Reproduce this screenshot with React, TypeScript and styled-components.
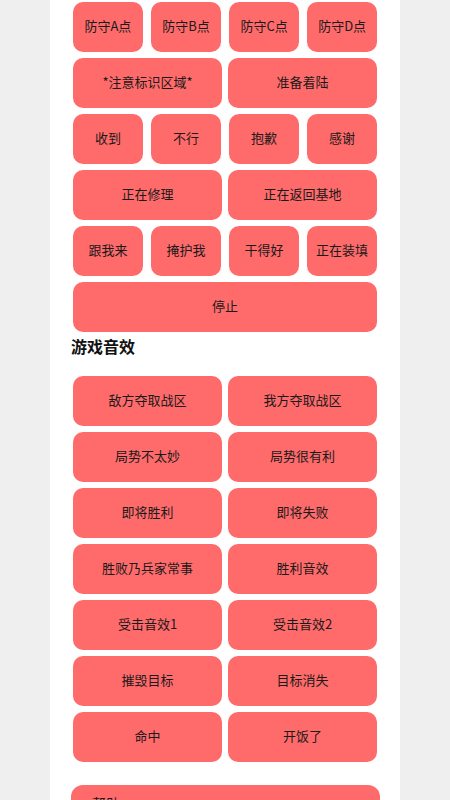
import * as React from 'react'
import styled, { createGlobalStyle } from 'styled-components'

const GlobalStyle = createGlobalStyle`
  html, body {
    margin: 0;
    padding: 0;
    background: #efefef;
    font-family: 'Noto Sans CJK SC', 'Noto Sans', sans-serif;
  }
`

const Page = styled.div`
  width: 350px;
  height: 800px;
  margin: 0 auto;
  background: #fff;
  padding: 2px 23px 0 23px;
  box-sizing: border-box;
  overflow: hidden;
`

const Grid = styled.div<{ cols: number }>`
  display: grid;
  grid-template-columns: repeat(${({ cols }) => cols}, 1fr);
  column-gap: ${({ cols }) => (cols === 4 ? '8.3px' : '6px')};
`

const Rows = styled.div`
  display: flex;
  flex-direction: column;
  gap: 6px;
`

const Button = styled.button`
  height: 50px;
  border: none;
  border-radius: 10px;
  background: #ff6b6b;
  color: #1a1a1a;
  font-family: inherit;
  font-size: 13px;
  padding: 0 0 3px 0;
  cursor: pointer;
`

const Heading = styled.h3`
  margin: 2px 0 18px -2px;
  font-size: 16px;
  line-height: 24px;
  font-weight: 700;
  color: #111;
`

const Panel = styled.div`
  margin: 23px -3px 0 -2px;
  height: 60px;
  border-radius: 12px;
  background: #ff6b6b;
  padding: 8px 21px;
  box-sizing: border-box;
  font-size: 14px;
  line-height: 20px;
  color: #1a1a1a;
`

const quick: string[][] = [
  ['防守A点', '防守B点', '防守C点', '防守D点'],
  ['*注意标识区域*', '准备着陆'],
  ['收到', '不行', '抱歉', '感谢'],
  ['正在修理', '正在返回基地'],
  ['跟我来', '掩护我', '干得好', '正在装填'],
  ['停止'],
]

const sounds: string[][] = [
  ['敌方夺取战区', '我方夺取战区'],
  ['局势不太妙', '局势很有利'],
  ['即将胜利', '即将失败'],
  ['胜败乃兵家常事', '胜利音效'],
  ['受击音效1', '受击音效2'],
  ['摧毁目标', '目标消失'],
  ['命中', '开饭了'],
]

const ButtonRows = ({ rows }: { rows: string[][] }) => (
  <Rows>
    {rows.map((row, i) => (
      <Grid key={i} cols={row.length}>
        {row.map((label) => (
          <Button key={label}>{label}</Button>
        ))}
      </Grid>
    ))}
  </Rows>
)

export default function App() {
  return (
    <>
      <GlobalStyle />
      <Page>
        <ButtonRows rows={quick} />
        <Heading>游戏音效</Heading>
        <ButtonRows rows={sounds} />
        <Panel>帮助</Panel>
      </Page>
    </>
  )
}
